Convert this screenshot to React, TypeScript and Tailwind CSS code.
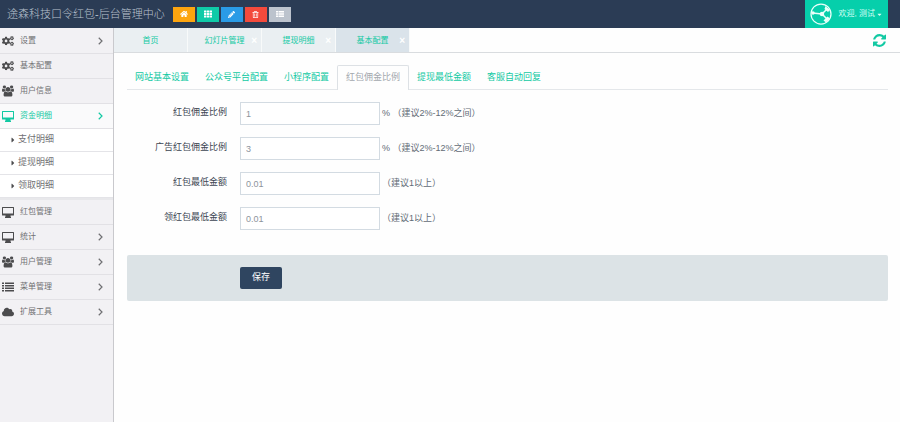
import { useState } from "react";
import type { ReactNode } from "react";
import {
  FaCaretDown,
  FaCaretRight,
  FaCloud,
  FaCogs,
  FaHome,
  FaPencilAlt,
  FaRegTrashAlt,
  FaTh,
} from "react-icons/fa";

function DesktopIcon() {
  return (
    <svg viewBox="0 0 24 22" className="h-[11px] w-3" fill="currentColor" aria-hidden="true">
      <path
        fillRule="evenodd"
        d="M1 0h22a1 1 0 0 1 1 1v15a1 1 0 0 1-1 1h-6v2l1 1v2H6v-2l1-1v-2H1a1 1 0 0 1-1-1V1a1 1 0 0 1 1-1zm1 2v11h20V2z"
      />
    </svg>
  );
}

function UsersIcon() {
  return (
    <svg viewBox="0 0 1920 1792" className="h-3 w-[13px]" fill="currentColor" aria-hidden="true">
      <path d="M593 896q-162 5-265 128h-134q-82 0-138-40.500t-56-118.500q0-353 124-353 6 0 43.500 21t97.500 42.500 119 21.500q67 0 133-23-5 37-5 66 0 139 81 256zm1071 637q0 120-73 189.500t-194 69.500h-874q-121 0-194-69.500t-73-189.500q0-53 3.500-103.500t14-109 26.500-108.500 43-97.500 62-81 85.500-53.500 111.500-20q10 0 43 21.500t73 48 107 48 135 21.500 135-21.500 107-48 73-48 43-21.500q61 0 111.500 20t85.500 53.500 62 81 43 97.500 26.500 108.500 14 109 3.500 103.500zm-1024-1277q0 106-75 181t-181 75-181-75-75-181 75-181 181-75 181 75 75 181zm704 384q0 159-112.500 271.500t-271.500 112.500-271.500-112.500-112.500-271.500 112.500-271.500 271.500-112.500 271.500 112.500 112.500 271.500zm576 225q0 78-56 118.500t-138 40.500h-134q-103-123-265-128 81-117 81-256 0-29-5-66 66 23 133 23 59 0 119-21.500t97.500-42.500 43.500-21q124 0 124 353zm-128-609q0 106-75 181t-181 75-181-75-75-181 75-181 181-75 181 75 75 181z" />
    </svg>
  );
}

function ListIcon() {
  return (
    <svg viewBox="0 0 24 20" className="h-[10px] w-3" fill="currentColor" aria-hidden="true">
      <path d="M0 1h4v3H0zM6 1h18v3H6zM0 6h4v3H0zM6 6h18v3H6zM0 11h4v3H0zM6 11h18v3H6zM0 16h4v3H0zM6 16h18v3H6z" />
    </svg>
  );
}

function SmallListIcon() {
  return (
    <svg viewBox="0 0 16 12" className="h-[6px] w-2" fill="currentColor" aria-hidden="true">
      <path d="M0 0h4v3H0zM5 0h11v3H5zM0 4.500h4v3H0zM5 4.500h11v3H5zM0 9h4v3H0zM5 9h11v3H5z" />
    </svg>
  );
}

function AngleIcon() {
  return (
    <svg viewBox="0 0 10 16" className="ml-auto h-2 w-[5px]" fill="none" stroke="currentColor" strokeWidth="2.400" aria-hidden="true">
      <path d="M1.500 1.500L8 8l-6.500 6.500" />
    </svg>
  );
}

function RefreshIcon() {
  return (
    <svg viewBox="0 0 1536 1536" className="size-[13px]" fill="currentColor" aria-hidden="true">
      <path d="M1511 928q0 5-1 7-64 268-268 434.500t-478 166.500q-146 0-282.500-55t-243.500-157l-129 129q-19 19-45 19t-45-19-19-45v-448q0-26 19-45t45-19h448q26 0 45 19t19 45-19 45l-137 137q71 66 161 102t187 36q134 0 250-65t186-179q11-17 53-117 8-23 30-23h192q13 0 22.500 9.500t9.500 22.500zm25-800v448q0 26-19 45t-45 19h-448q-26 0-45-19t-19-45 19-45l138-138q-148-137-349-137-134 0-250 65t-186 179q-11 17-53 117-8 23-30 23h-199q-13 0-22.500-9.500t-9.500-22.500v-7q65-268 270-434.500t480-166.500q146 0 284 55.500t245 156.500l130-129q19-19 45-19t45 19 19 45z" />
    </svg>
  );
}

function Avatar() {
  return (
    <svg viewBox="0 0 44 44" className="size-[22px]" fill="none" stroke="#e8fffa" aria-hidden="true">
      <circle cx="22" cy="22" r="20" strokeWidth="2.500" />
      <path d="M5 20l19 2M24 22l11-11M24 22l11 11" strokeWidth="3" />
      <circle cx="24" cy="22" r="4.500" fill="#e8fffa" stroke="none" />
      <circle cx="6" cy="20" r="3.500" fill="#e8fffa" stroke="none" />
      <path d="M31 6l9 8-4 4-7-6zM40 31l-8 8-5-4 8-8z" fill="#e8fffa" stroke="none" />
    </svg>
  );
}

const shortcuts = [
  { label: "首页", color: "bg-[#fda50f]", icon: <FaHome /> },
  { label: "模块", color: "bg-[#0fcba8]", icon: <FaTh /> },
  { label: "编辑", color: "bg-[#2a9be6]", icon: <FaPencilAlt className="size-[7px]" /> },
  { label: "删除", color: "bg-[#f34a3c]", icon: <FaRegTrashAlt className="size-[7px]" /> },
  { label: "列表", color: "bg-[#bcc3cd]", icon: <SmallListIcon /> },
];

type MenuItem = {
  label: string;
  icon: ReactNode;
  arrow?: boolean;
  children?: string[];
};

const menu: MenuItem[] = [
  { label: "设置", icon: <FaCogs />, arrow: true },
  { label: "基本配置", icon: <FaCogs /> },
  { label: "用户信息", icon: <UsersIcon /> },
  {
    label: "资金明细",
    icon: <DesktopIcon />,
    arrow: true,
    children: ["支付明细", "提现明细", "领取明细"],
  },
  { label: "红包管理", icon: <DesktopIcon /> },
  { label: "统计", icon: <DesktopIcon />, arrow: true },
  { label: "用户管理", icon: <UsersIcon />, arrow: true },
  { label: "菜单管理", icon: <ListIcon />, arrow: true },
  { label: "扩展工具", icon: <FaCloud />, arrow: true },
];

const pages = ["首页", "幻灯片管理", "提现明细", "基本配置"];

const sections = [
  "网站基本设置",
  "公众号平台配置",
  "小程序配置",
  "红包佣金比例",
  "提现最低金额",
  "客服自动回复",
];

const fields = [
  { id: "rate", label: "红包佣金比例", value: "1", unit: "%", hint: "（建议2%-12%之间）" },
  { id: "ad-rate", label: "广告红包佣金比例", value: "3", unit: "%", hint: "（建议2%-12%之间）" },
  { id: "min", label: "红包最低金额", value: "0.01", hint: "（建议1以上）" },
  { id: "receive-min", label: "领红包最低金额", value: "0.01", hint: "（建议1以上）" },
];

function Header() {
  return (
    <header className="flex h-7 items-center bg-[#2b3c55] pr-3 pl-[7px]">
      <h1 className="text-[11px] font-light whitespace-nowrap text-[#b9c2ce]">途森科技口令红包-后台管理中心</h1>
      <div className="ml-2 flex gap-[2px]">
        {shortcuts.map((s) => (
          <button
            key={s.label}
            aria-label={s.label}
            className={`flex h-[15px] w-[22px] items-center justify-center text-[8px] text-white ${s.color}`}
          >
            {s.icon}
          </button>
        ))}
      </div>
      <button className="ml-auto flex h-full items-center bg-[#06cfab] px-[5px] text-[8px] whitespace-nowrap text-[#d5fff5]">
        <Avatar />
        <span className="ml-[7px]">欢迎, 测试</span>
        <FaCaretDown className="ml-px size-[7px]" />
      </button>
    </header>
  );
}

function Sidebar() {
  return (
    <nav className="w-[114px] shrink-0 border-r border-[#c9c9cd] bg-[#f2f1f4] pt-px text-[8px] text-[#707073]">
      <ul>
        {menu.map((item) => (
          <li key={item.label}>
            <a
              href="#"
              className={`flex h-[25px] items-center border-b border-[#e2e1e5] pr-[10px] pl-[2px] ${
                item.children ? "bg-[#fafafb] text-[#12c9a3]" : ""
              }`}
            >
              <span className={`flex w-3 text-[12px] ${item.children ? "" : "text-[#4c4c4e]"}`}>{item.icon}</span>
              <span className="ml-[6px]">{item.label}</span>
              {item.arrow && <AngleIcon />}
            </a>
            {item.children && (
              <ul className="border-b-2 border-[#e8e8eb] bg-white text-[9px]">
                {item.children.map((child) => (
                  <li key={child} className="border-b border-[#e4e4e8]">
                    <a href="#" className="flex h-[22px] items-center pl-[9px]">
                      <FaCaretRight className="size-2 text-[#4c4c4e]" />
                      <span className="ml-px">{child}</span>
                    </a>
                  </li>
                ))}
              </ul>
            )}
          </li>
        ))}
      </ul>
    </nav>
  );
}

function PageTabs() {
  return (
    <div className="flex h-[25px] items-center border-b border-[#d9dcdf] pr-[14px]">
      <div className="flex h-full text-[8px] text-[#12c9a3]">
        {pages.map((page, i) => (
          <div
            key={page}
            className={`relative flex w-[74px] items-center justify-center border-r border-[#f8fafa] pt-px ${
              i === 3 ? "bg-[#dae3ea]" : "bg-[#eaeff2]"
            }`}
          >
            <a href="#">{page}</a>
            {i > 0 && (
              <button aria-label={`关闭${page}`} className="absolute right-1 text-[10px] font-bold text-white">
                ×
              </button>
            )}
          </div>
        ))}
      </div>
      <button aria-label="刷新" className="ml-auto text-[#12c9a3]">
        <RefreshIcon />
      </button>
    </div>
  );
}

function SettingsForm() {
  const [values, setValues] = useState(fields.map((f) => f.value));

  return (
    <form className="text-[9px]" onSubmit={(e) => e.preventDefault()}>
      <div className="flex flex-col gap-3 pt-3">
        {fields.map((f, i) => (
          <div key={f.id} className="flex h-[23px] items-center">
            <label htmlFor={f.id} className="w-[100px] pb-[2px] text-right text-[#3c4552]">
              {f.label}
            </label>
            <input
              id={f.id}
              value={values[i]}
              onChange={(e) => setValues(values.map((v, n) => (n === i ? e.target.value : v)))}
              className="ml-[13px] h-full w-[140px] border border-[#d3dbe2] bg-white px-[5px] text-[9px] text-[#8d949c] outline-none focus:border-[#12c9a3]"
            />
            <span className="ml-[2px] text-[#626b76]">
              {f.unit} {f.hint}
            </span>
          </div>
        ))}
      </div>
      <div className="mt-[25px] rounded-xs bg-[#dce3e6] py-3 pl-[113px]">
        <button type="submit" className="block h-[22px] rounded-xs bg-[#2f4560] px-3 text-[9px] text-white">
          保存
        </button>
      </div>
    </form>
  );
}

export default function App() {
  const [active, setActive] = useState(3);

  return (
    <div className="flex min-h-screen flex-col bg-[#fefefe] font-['Liberation_Sans','Noto_Sans_CJK_SC',sans-serif]">
      <Header />
      <div className="flex flex-1">
        <Sidebar />
        <main className="min-w-0 flex-1">
          <PageTabs />
          <div className="pt-3 pr-3 pl-[13px]">
            <div role="tablist" className="flex border-b border-[#e4e7ea] text-[9px]">
              {sections.map((section, i) => (
                <button
                  key={section}
                  role="tab"
                  aria-selected={i === active}
                  onClick={() => setActive(i)}
                  className={`-mb-px h-[25px] px-2 whitespace-nowrap ${
                    i === active
                      ? "rounded-t-xs border border-b-0 border-[#dde1e5] bg-[#fefefe] text-[#a3a8ae]"
                      : "text-[#12c9a3]"
                  }`}
                >
                  {section}
                </button>
              ))}
            </div>
            <SettingsForm />
          </div>
        </main>
      </div>
    </div>
  );
}
